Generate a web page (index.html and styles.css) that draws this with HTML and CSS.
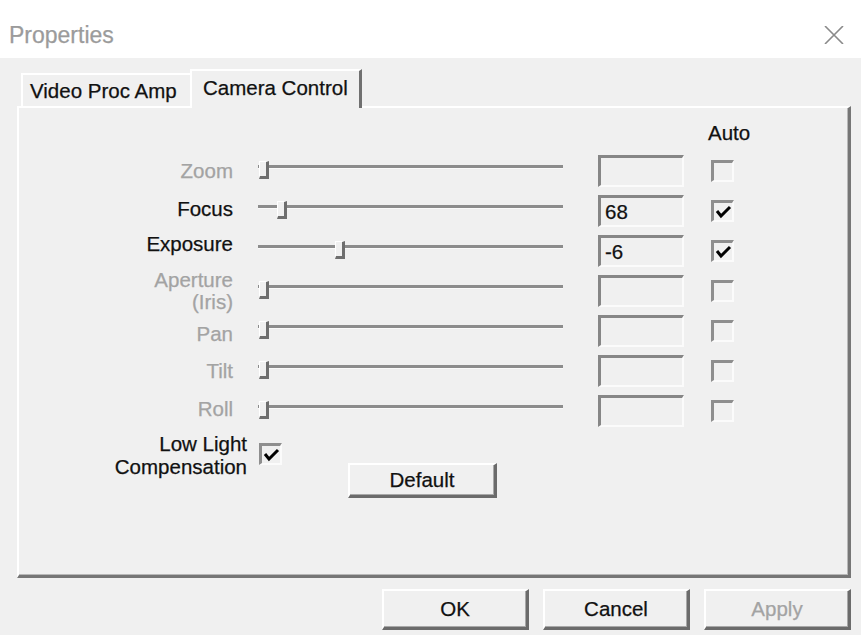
FILE: index.html
```html
<!DOCTYPE html>
<html>
<head>
<meta charset="utf-8">
<title>Properties</title>
<link rel="stylesheet" href="styles.css">
</head>
<body>
<div class="window">
  <div class="titlebar">
    <span class="title">Properties</span>
    <svg class="close" viewBox="0 0 20 18" width="20" height="18"><path d="M1 0 L19 18 M19 0 L1 18" stroke="#8a8a8a" stroke-width="1.6" fill="none"/></svg>
  </div>
  <div class="tabs">
    <div class="tab">Video Proc Amp</div>
    <div class="tab active">Camera Control</div>
  </div>
  <div class="panel">
    <div class="auto-head">Auto</div>

    <div class="row disabled">
      <div class="label">Zoom</div>
      <div class="slider"><div class="track"></div><div class="thumb" style="left:1px"></div></div>
      <div class="field"></div>
      <div class="check"></div>
    </div>
    <div class="row">
      <div class="label label-up">Focus</div>
      <div class="slider"><div class="track"></div><div class="thumb" style="left:19px"></div></div>
      <div class="field">68</div>
      <div class="check"><svg viewBox="0 0 18 17" width="18" height="17"><polyline points="3,8 7,13 16,4" stroke="#000" stroke-width="3" fill="none"/></svg></div>
    </div>
    <div class="row">
      <div class="label label-up2">Exposure</div>
      <div class="slider"><div class="track"></div><div class="thumb" style="left:77px"></div></div>
      <div class="field">-6</div>
      <div class="check"><svg viewBox="0 0 18 17" width="18" height="17"><polyline points="3,8 7,13 16,4" stroke="#000" stroke-width="3" fill="none"/></svg></div>
    </div>
    <div class="row disabled">
      <div class="label two">Aperture<br>(Iris)</div>
      <div class="slider"><div class="track"></div><div class="thumb" style="left:1px"></div></div>
      <div class="field"></div>
      <div class="check"></div>
    </div>
    <div class="row disabled">
      <div class="label label-down">Pan</div>
      <div class="slider"><div class="track"></div><div class="thumb" style="left:1px"></div></div>
      <div class="field"></div>
      <div class="check"></div>
    </div>
    <div class="row disabled">
      <div class="label">Tilt</div>
      <div class="slider"><div class="track"></div><div class="thumb" style="left:1px"></div></div>
      <div class="field"></div>
      <div class="check"></div>
    </div>
    <div class="row disabled">
      <div class="label label-up">Roll</div>
      <div class="slider"><div class="track"></div><div class="thumb" style="left:1px"></div></div>
      <div class="field"></div>
      <div class="check"></div>
    </div>

    <div class="lowlight">
      <div class="ll-label">Low Light<br>Compensation</div>
      <div class="check ll-check"><svg viewBox="0 0 18 17" width="18" height="17"><polyline points="3,8 7,13 16,4" stroke="#000" stroke-width="3" fill="none"/></svg></div>
      <button class="btn default-btn">Default</button>
    </div>
  </div>
  <div class="buttons">
    <button class="btn">OK</button>
    <button class="btn">Cancel</button>
    <button class="btn disabled-btn">Apply</button>
  </div>
</div>
</body>
</html>
```
FILE: styles.css
```css
html, body {
  margin: 0;
  padding: 0;
}
body {
  background: #f0f0f0;
  font-family: "Liberation Sans", Arial, sans-serif;
  font-size: 20.5px;
  color: #111;
  width: 861px;
  height: 635px;
  overflow: hidden;
  -webkit-text-stroke: 0.25px currentColor;
}
.window {
  width: 861px;
  height: 635px;
}
.titlebar {
  height: 58px;
  background: #fff;
  display: flex;
  justify-content: space-between;
  align-items: flex-start;
}
.title {
  font-size: 23px;
  line-height: 24px;
  color: #9b9b9b;
  padding: 23px 0 0 9px;
}
.close {
  margin: 26px 17px 0 0;
}
.tabs {
  display: flex;
  align-items: flex-end;
  height: 37px;
  margin: 11px 0 0 21px;
}
.tab {
  box-sizing: border-box;
  width: 171px;
  height: 33px;
  padding-left: 7px;
  line-height: 31px;
  border-top: 2px solid #fff;
  border-left: 2px solid #fff;
  white-space: nowrap;
}
.tab.active {
  position: relative;
  z-index: 1;
  width: 172px;
  height: 39px;
  margin-left: -2px;
  margin-bottom: -2px;
  padding-left: 11px;
  line-height: 34px;
  background: #f0f0f0;
  border-right: 3px solid #707070;
}
.panel {
  box-sizing: border-box;
  width: 834px;
  height: 472px;
  margin-left: 17px;
  border-top: 2px solid #fff;
  border-left: 2px solid #fff;
  border-right: 3px solid #767676;
  border-bottom: 3px solid #767676;
  box-shadow: inset -1px -1px 0 #b8b8b8;
}
.auto-head {
  height: 43px;
  box-sizing: border-box;
  padding: 14px 0 0 689px;
  line-height: 22px;
}
.row {
  display: flex;
  align-items: center;
  height: 40px;
}
.row.disabled .label {
  color: #a3a3a3;
}
.label {
  width: 214px;
  text-align: right;
  line-height: 22px;
}
.label-up {
  margin-bottom: 5px;
}
.label-up2 {
  margin-bottom: 14px;
}
.label-down {
  margin-top: 5px;
}
.slider {
  position: relative;
  align-self: stretch;
  width: 305px;
  margin-left: 25px;
}
.track {
  height: 3px;
  margin-top: 14px;
  background: #8c8c8c;
  box-shadow: 0 1px 0 #fafafa;
}
.thumb {
  position: absolute;
  top: 10px;
  box-sizing: border-box;
  width: 10px;
  height: 18px;
  background: #f0f0f0;
  border-top: 1px solid #fff;
  border-left: 1px solid #fff;
  border-right: 3px solid #6e6e6e;
  border-bottom: 3px solid #6e6e6e;
}
.field {
  box-sizing: border-box;
  width: 86px;
  height: 32px;
  margin-left: 35px;
  padding-left: 4px;
  line-height: 28px;
  border-top: 3px solid #868686;
  border-left: 3px solid #868686;
  border-right: 2px solid #fbfbfb;
  border-bottom: 2px solid #fbfbfb;
}
.check {
  box-sizing: border-box;
  width: 23px;
  height: 22px;
  margin-left: 27px;
  border-top: 3px solid #8e8e8e;
  border-left: 3px solid #8e8e8e;
  border-right: 2px solid #fbfbfb;
  border-bottom: 2px solid #fbfbfb;
}
.check svg {
  display: block;
}
.lowlight {
  display: flex;
  align-items: flex-start;
  margin-top: 1px;
}
.ll-label {
  width: 228px;
  text-align: right;
  line-height: 23px;
}
.check.ll-check {
  margin: 11px 0 0 12px;
}
.btn {
  box-sizing: border-box;
  width: 147px;
  height: 41px;
  padding: 0;
  background: #f0f0f0;
  font-family: inherit;
  font-size: 20.5px;
  color: #111;
  -webkit-text-stroke: 0.25px currentColor;
  border-top: 2px solid #fff;
  border-left: 2px solid #fff;
  border-right: 3px solid #6b6b6b;
  border-bottom: 3px solid #6b6b6b;
  box-shadow: inset -1px -1px 0 #a8a8a8;
}
.default-btn {
  width: 149px;
  height: 35px;
  margin: 31px 0 0 66px;
}
.disabled-btn {
  color: #a3a3a3;
}
.buttons {
  display: flex;
  justify-content: flex-end;
  gap: 14px;
  margin-top: 11px;
  padding-right: 10px;
}
```
